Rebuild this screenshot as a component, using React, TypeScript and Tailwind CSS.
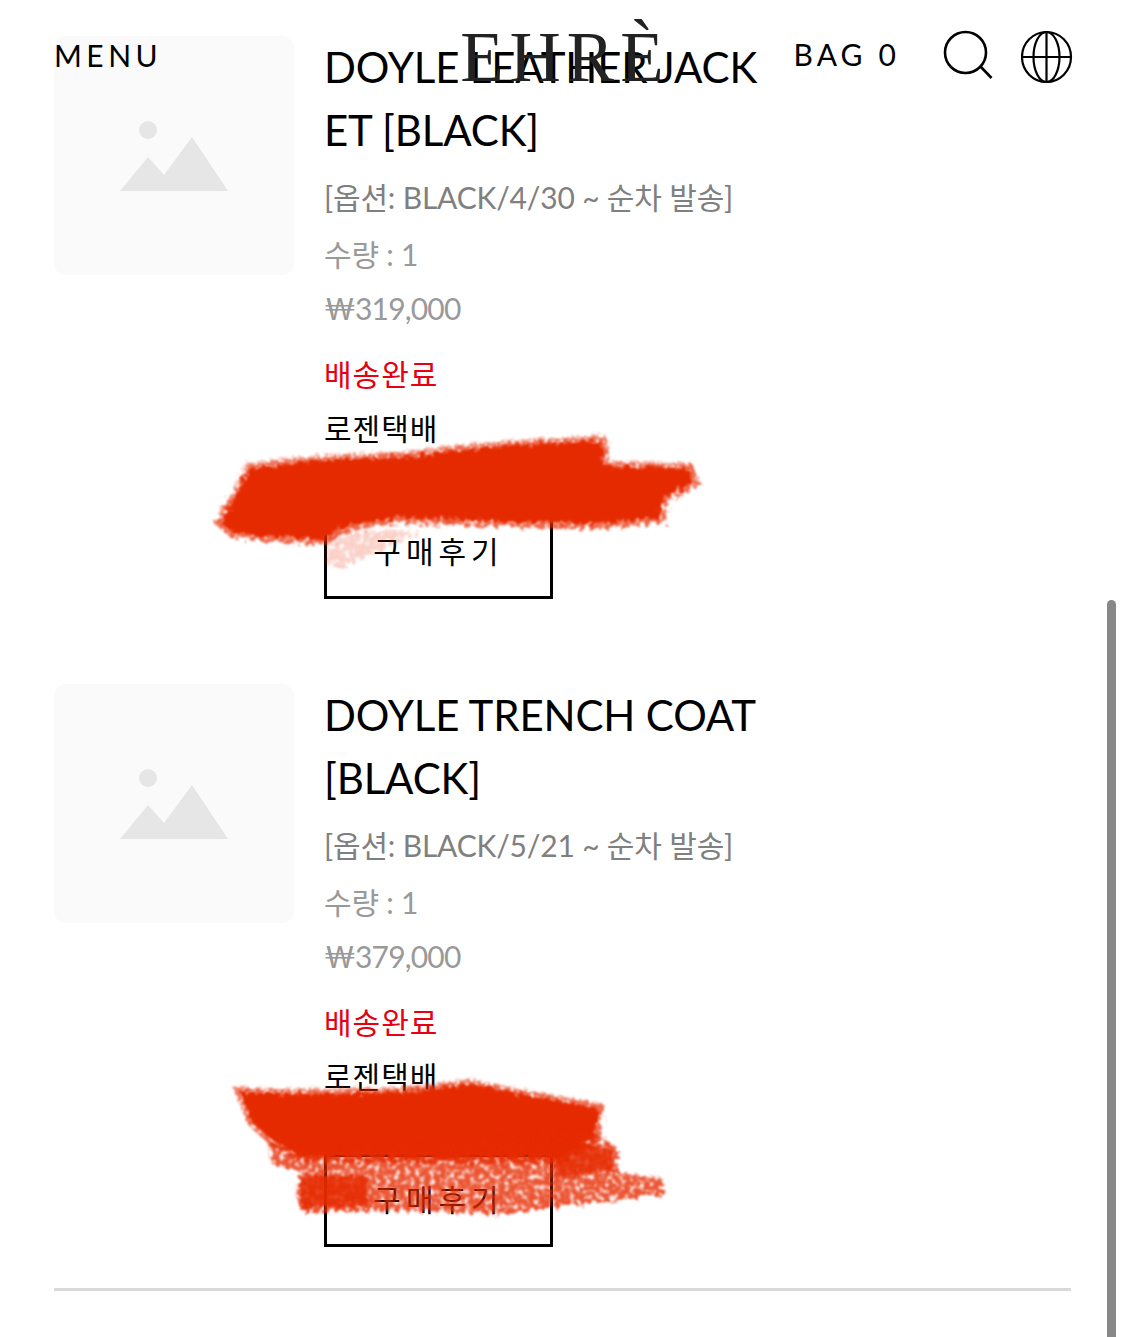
const FONT = 'font-["Lato","Noto_Sans_CJK_KR",sans-serif]';

interface Order {
  title: string;
  option: string;
  price: string;
}

const orders: Order[] = [
  { title: 'DOYLE LEATHER JACKET [BLACK]', option: '[옵션: BLACK/4/30 ~ 순차 발송]', price: '₩319,000' },
  { title: 'DOYLE TRENCH COAT [BLACK]', option: '[옵션: BLACK/5/21 ~ 순차 발송]', price: '₩379,000' },
];

const stroke1 =
  'M220 522 L236 495 L250 468 L320 460 L400 457 L500 446 L602 440 L604 466 L688 468 L694 482 L664 497 L660 518 L590 524 L520 522 L400 518 L345 526 L325 540 L262 536 L232 532 Z';
const stroke2Top =
  'M240 1092 L300 1094 L400 1092 L470 1084 L520 1094 L598 1108 L596 1135 L560 1158 L300 1156 L272 1140 L252 1122 Z';
const stroke2Low =
  'M268 1142 L320 1150 L590 1130 L618 1148 L618 1172 L662 1178 L664 1194 L610 1200 L500 1214 L400 1210 L300 1212 L296 1190 L302 1172 L272 1164 Z';

function Placeholder() {
  return (
    <div className="w-[240px] h-[239px] shrink-0 bg-[#fafafa] rounded-[12px]">
      <svg width="240" height="239" viewBox="0 0 240 239" fill="#e6e6e6">
        <circle cx="94" cy="94" r="9" />
        <path d="M66 155 L94 121 L110 139 L138 101 L174 155 Z" />
      </svg>
    </div>
  );
}

function OrderRow({ order }: { order: Order }) {
  return (
    <div className="flex gap-[30px] h-[648px]">
      <Placeholder />
      <div className="w-[440px]">
        <h2 className="text-[42px] leading-[63px] tracking-[-0.15px] text-black break-all font-normal">{order.title}</h2>
        <p className="mt-[8px] text-[30px] leading-[54px] tracking-[-0.18px] text-[#808080] whitespace-nowrap">{order.option}</p>
        <p className="mt-[3px] text-[30px] leading-[54px] tracking-[-0.2px] text-[#999999]">수량 : 1</p>
        <p className="text-[30px] leading-[54px] tracking-[-0.8px] text-[#999999]">{order.price}</p>
        <p className="mt-[12px] text-[30px] leading-[54px] tracking-[1px] text-[#e60012]">배송완료</p>
        <p className="text-[30px] leading-[54px] tracking-[1px] text-black">로젠택배</p>
        <button className="mt-[51px] w-[229px] h-[93px] border-[3px] border-black text-[30px] tracking-[5px] text-black pb-[2px] block">
          구매후기
        </button>
      </div>
    </div>
  );
}

function Header() {
  return (
    <header className="absolute top-0 left-0 w-full h-[110px] flex items-start text-black z-20">
      <span className="ml-[54px] mt-[36px] text-[30px] leading-[38px] tracking-[4.5px]">MENU</span>
      <span className='ml-[298px] mt-[14px] font-["Liberation_Serif",serif] text-[71px] leading-[86px] tracking-[6px] text-[#222222] whitespace-nowrap'>EHRÈ</span>
      <span className="ml-[124px] mt-[35px] text-[30px] leading-[38px] tracking-[4.1px] whitespace-nowrap">BAG 0</span>
      <svg className="ml-[43px] mt-[29px] shrink-0" width="54" height="54" viewBox="0 0 54 54" fill="none" stroke="black" strokeWidth="2.6">
        <circle cx="22.5" cy="23.5" r="20.5" />
        <path d="M37 37 L48.5 49" />
      </svg>
      <svg className="ml-[24px] mt-[29px] shrink-0" width="54" height="56" viewBox="0 0 54 56" fill="none" stroke="black" strokeWidth="2.2">
        <ellipse cx="25.5" cy="28" rx="24.5" ry="25" />
        <ellipse cx="25.5" cy="28" rx="13" ry="25" />
        <path d="M25.5 3 V53 M1 28 H50" />
      </svg>
    </header>
  );
}

function Scribbles() {
  return (
    <svg className="absolute top-0 left-0 z-10 pointer-events-none" width="1125" height="1337" viewBox="0 0 1125 1337">
      <defs>
        <filter id="rough" x="-10%" y="-30%" width="120%" height="160%">
          <feTurbulence type="fractalNoise" baseFrequency="0.2" numOctaves="3" seed="4" result="n" />
          <feDisplacementMap in="SourceGraphic" in2="n" scale="12" result="d" />
          <feGaussianBlur in="d" stdDeviation="1.1" />
        </filter>
        <filter id="speckle" x="-10%" y="-30%" width="120%" height="160%">
          <feTurbulence type="fractalNoise" baseFrequency="0.2" numOctaves="3" seed="9" result="n" />
          <feDisplacementMap in="SourceGraphic" in2="n" scale="14" result="d" />
          <feColorMatrix in="n" type="matrix" values="0 0 0 0 0  0 0 0 0 0  0 0 0 0 0  0 0 0 -3.5 2.7" result="mask" />
          <feComposite in="d" in2="mask" operator="in" result="s" />
          <feGaussianBlur in="s" stdDeviation="1.1" />
        </filter>
      </defs>
      <g fill="#e62a00">
        <path filter="url(#speckle)" d={stroke1} stroke="#e62a00" strokeWidth="10" opacity="0.7" />
        <path filter="url(#rough)" d={stroke1} />
        <path filter="url(#speckle)" opacity="0.22" d="M326 530 L420 530 L380 550 L345 566 L326 566 Z" />
        <path filter="url(#speckle)" d={stroke2Top} stroke="#e62a00" strokeWidth="10" opacity="0.7" />
        <path filter="url(#rough)" d={stroke2Top} />
        <path filter="url(#speckle)" opacity="0.8" d={stroke2Low} />
        <path filter="url(#rough)" opacity="0.85" d="M300 1176 L366 1176 L370 1205 L300 1208 Z" />
        <path filter="url(#rough)" opacity="0.8" d="M552 1136 L612 1150 L612 1170 L556 1178 Z" />
      </g>
    </svg>
  );
}

export default function App() {
  return (
    <div className={`relative w-[1125px] h-[1337px] overflow-hidden bg-white ${FONT}`}>
      <Header />
      <main className="pt-[36px] pl-[54px] pr-[54px]">
        {orders.map((order) => (
          <OrderRow key={order.title} order={order} />
        ))}
        <div className="-mt-[44px] h-[3px] bg-[#d9d9d9]" />
      </main>
      <Scribbles />
      {/* scrollbar */}
      <div className="absolute top-[600px] left-[1107px] w-[9px] h-[737px] bg-[#888888] rounded-t-full" />
    </div>
  );
}
